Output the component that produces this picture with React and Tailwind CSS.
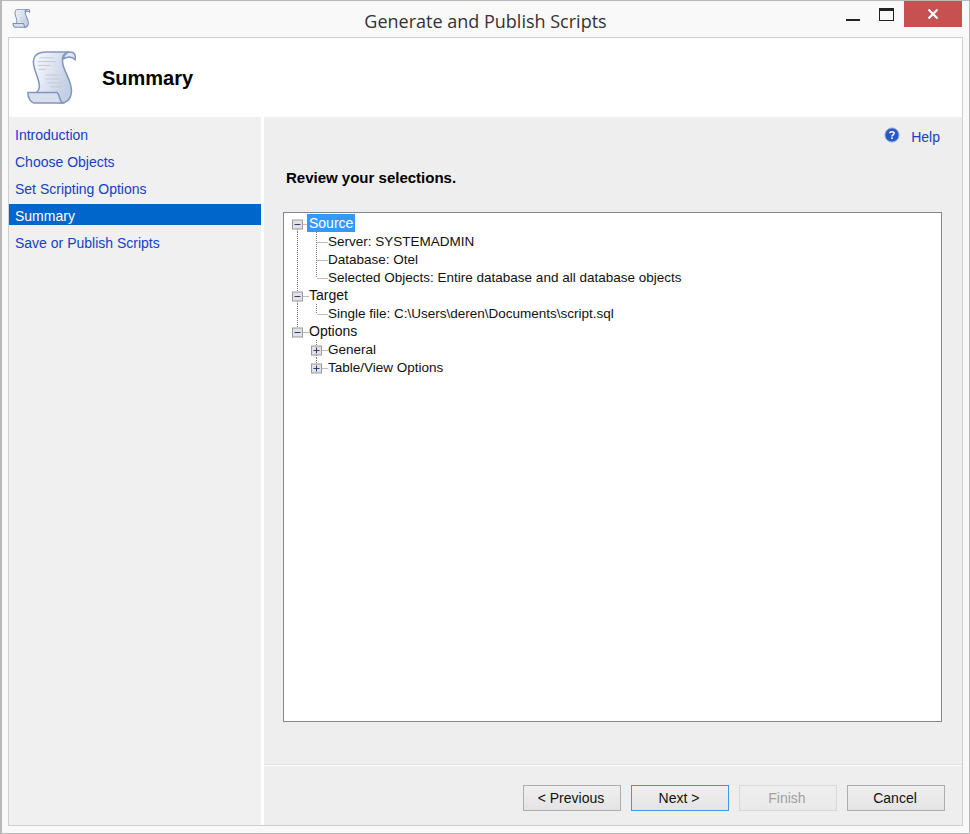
import React from "react";

const sans = "font-['Liberation_Sans',Arial,sans-serif]";

const navItems = [
  { id: 1, name: "Introduction" },
  { id: 2, name: "Choose Objects" },
  { id: 3, name: "Set Scripting Options" },
  { id: 4, name: "Summary", active: true },
  { id: 5, name: "Save or Publish Scripts" },
];

const treeRows = [
  { id: 1, text: "Source", level: 0, box: "minus", up: false, down: true, selected: true },
  { id: 2, text: "Server: SYSTEMADMIN", level: 1, rail: true, up: true, down: true },
  { id: 3, text: "Database: Otel", level: 1, rail: true, up: true, down: true },
  { id: 4, text: "Selected Objects: Entire database and all database objects", level: 1, rail: true, up: true, down: false },
  { id: 5, text: "Target", level: 0, box: "minus", up: true, down: true },
  { id: 6, text: "Single file: C:\\Users\\deren\\Documents\\script.sql", level: 1, rail: true, up: true, down: false },
  { id: 7, text: "Options", level: 0, box: "minus", up: true, down: false },
  { id: 8, text: "General", level: 1, box: "plus", up: true, down: true },
  { id: 9, text: "Table/View Options", level: 1, box: "plus", up: true, down: false },
];

const ScrollIcon = ({ size = 52, line = 1.6, color = "#8496bd" }) => (
  <svg width={size} height={size} viewBox="0 0 52 56">
    <defs>
      <linearGradient id="paper" x1="0" y1="0" x2="1" y2="0.4">
        <stop offset="0" stopColor="#fbfcfe" />
        <stop offset="1" stopColor="#c3cfe4" />
      </linearGradient>
    </defs>
    <path d="M10 43 C19 36 4 18 7 9 C8 3 14 1 20 1 L44 1 C38 2 36 6 37 12 C38 22 48 32 46 44 C45 52 40 54 34 54 C30 53 33 44 10 43 Z" fill="url(#paper)" stroke={color} strokeWidth={line} />
    <path d="M38 8 C38 3 42 1 45 1 C49 1 51 4 50 9 C47 6 42 6 38 8 Z" fill="#dfe5f1" stroke={color} strokeWidth={line} />
    <path d="M1 43 L31 43 C34 44 33 51 37 54 L7 54 C4 53 1 49 1 43 Z" fill="#d7deee" stroke={color} strokeWidth={line} />
    <path d="M13 7 H28 M11 11 H30 M11 15 H24 M12 19 H20 M20 25 H32 M19 29 H34 M21 33 H37 M24 37 H36" stroke="#c3c9d6" strokeWidth="1" fill="none" />
  </svg>
);

const HelpIcon = () => (
  <svg width="16" height="16" viewBox="0 0 16 16">
    <circle cx="8" cy="8" r="7.2" fill="#2f5fc4" stroke="#a9c0ea" strokeWidth="1" />
    <circle cx="8" cy="8" r="5.6" fill="#2a58bd" />
    <path d="M5.8 6.2 C5.9 4.2 10.2 4.1 10.2 6.3 C10.2 7.8 8 7.9 8 9.4" stroke="#fff" strokeWidth="1.5" fill="none" />
    <rect x="7.2" y="10.4" width="1.6" height="1.6" fill="#fff" />
  </svg>
);

// one tree row's gutter: dotted connectors and the +/- box, drawn per row
const TreeGutter = ({ row }) => {
  const dot = { stroke: "#7a7a7a", strokeWidth: 1, strokeDasharray: "1 1" };
  const rootX = 13.5;
  const x = row.level === 0 ? rootX : 32.5;
  return (
    <svg width="44" height="18" className="shrink-0">
      {row.rail && <line x1={rootX} y1="0" x2={rootX} y2="18" {...dot} />}
      {row.rail && <line x1={x} y1="0" x2={x} y2={row.down ? 18 : 10} {...dot} />}
      {row.box && row.up && <line x1={x} y1="0" x2={x} y2="6" {...dot} />}
      {row.box && row.down && <line x1={x} y1="15" x2={x} y2="18" {...dot} />}
      <line x1={row.box ? x + 6 : x + 1} y1="10.5" x2={row.level === 0 ? 25 : 44} y2="10.5" {...dot} />
      {row.box && (
        <g>
          <rect x={x - 5} y="6" width="10" height="9" fill="#e2e2e6" stroke="#9a9a9a" />
          <line x1={x - 3} y1="10.5" x2={x + 3} y2="10.5" stroke="#2d3f73" />
          {row.box === "plus" && <line x1={x} y1="7.5" x2={x} y2="13.5" stroke="#2d3f73" />}
        </g>
      )}
    </svg>
  );
};

const WizardButton = ({ label, focused, disabled }) => (
  <button
    className={`w-[98px] h-[26px] border text-[14px] pr-[2px] bg-gradient-to-b ${
      disabled ? "from-[#efefef] to-[#e9e9e9] border-[#d9d9d9] text-[#a0a0a0]" : "from-[#f0f0f0] to-[#e4e4e4] text-[#111]"
    } ${focused ? "border-[#3c97ee]" : ""} ${!focused && !disabled ? "border-[#adadad]" : ""}`}
  >
    {label}
  </button>
);

const App = () => {
  return (
    <div className={`w-[970px] h-[834px] bg-[#f9f9f9] border border-[#b9b9b9] border-l-2 flex flex-col overflow-hidden ${sans}`}>
      <header className="h-[36px] shrink-0 flex items-start">
        <div className="w-[130px] pl-[10px] pt-[8px]">
          <ScrollIcon size={19} line={3} color="#7f8fb3" />
        </div>
        <div className="flex-1 text-center text-[18px] text-[#333] pt-[7px] font-['Open_Sans',sans-serif]">
          Generate and Publish Scripts
        </div>
        <div className="w-[130px] flex justify-end items-start pr-[7px]">
          <div className="w-[14px] h-[2px] bg-[#222] mt-[18px] mr-[19px]" />
          <div className="w-[15px] h-[13px] border border-[#222] border-t-[3px] mt-[7px] mr-[10px]" />
          <div className="w-[58px] h-[26px] bg-[#c75050] flex items-center justify-center">
            <svg width="12" height="10" viewBox="0 0 12 10">
              <path d="M1.5 0.5 L10.5 9.5 M10.5 0.5 L1.5 9.5" stroke="#fff" strokeWidth="2.2" />
            </svg>
          </div>
        </div>
      </header>

      <div className="ml-[6px] mr-[7px] w-[955px] h-[789px] border border-[#cfcfcf] flex flex-col">
        <div className="h-[79px] shrink-0 bg-white flex items-center">
          <div className="pl-[16px] pt-[1px] w-[93px]">
            <ScrollIcon size={54} />
          </div>
          <h1 className="text-[20px] font-bold text-black leading-none">Summary</h1>
        </div>

        <div className="flex-1 flex">
          <nav className="w-[252px] bg-[#f0f0f0] pt-[6px] shrink-0">
            {navItems.map((item) => (
              <div
                key={item.id}
                className={`h-[21px] mb-[6px] pl-[6px] text-[14px] leading-[24px] ${
                  item.active ? "bg-[#0066cc] text-white" : "text-[#1540c4]"
                }`}
              >
                {item.name}
              </div>
            ))}
          </nav>
          <div className="w-[3px] bg-white shrink-0" />

          <main className="flex-1 bg-[#eeeeee] flex flex-col">
            <div className="flex-1 px-[19px] pt-[11px] border-b border-[#e2e2e2] shadow-[0_1px_0_#fafafa]">
              <div className="flex justify-end items-center h-[18px] pr-[3px] gap-[10px]">
                <div className="-mt-[4px]"><HelpIcon /></div>
                <a className="text-[14px] text-[#1540c4] pl-[1px]">Help</a>
              </div>
              <p className="text-[15px] font-bold text-black mt-[23px] ml-[3px] leading-[18px]">Review your selections.</p>
              <div className="mt-[25px] h-[510px] w-[659px] bg-white border border-[#82878f] pt-[1px] text-[14px] text-[#111]">
                {treeRows.map((row) => (
                  <div key={row.id} className="h-[18px] flex items-center">
                    <TreeGutter row={row} />
                    <span
                      className={`leading-[18px] ${row.level === 0 ? "-ml-[19px]" : "text-[13.5px] mt-[2px]"} ${
                        row.selected ? "bg-[#3399ff] text-white px-[2px] -ml-[21px]" : ""
                      }`}
                    >
                      {row.text}
                    </span>
                  </div>
                ))}
              </div>
            </div>
            <div className="h-[60px] shrink-0 flex justify-end items-start gap-[10px] pt-[20px] pr-[17px]">
              <WizardButton label="< Previous" />
              <WizardButton label="Next >" focused />
              <WizardButton label="Finish" disabled />
              <WizardButton label="Cancel" />
            </div>
          </main>
        </div>
      </div>
    </div>
  );
};

export default App;
